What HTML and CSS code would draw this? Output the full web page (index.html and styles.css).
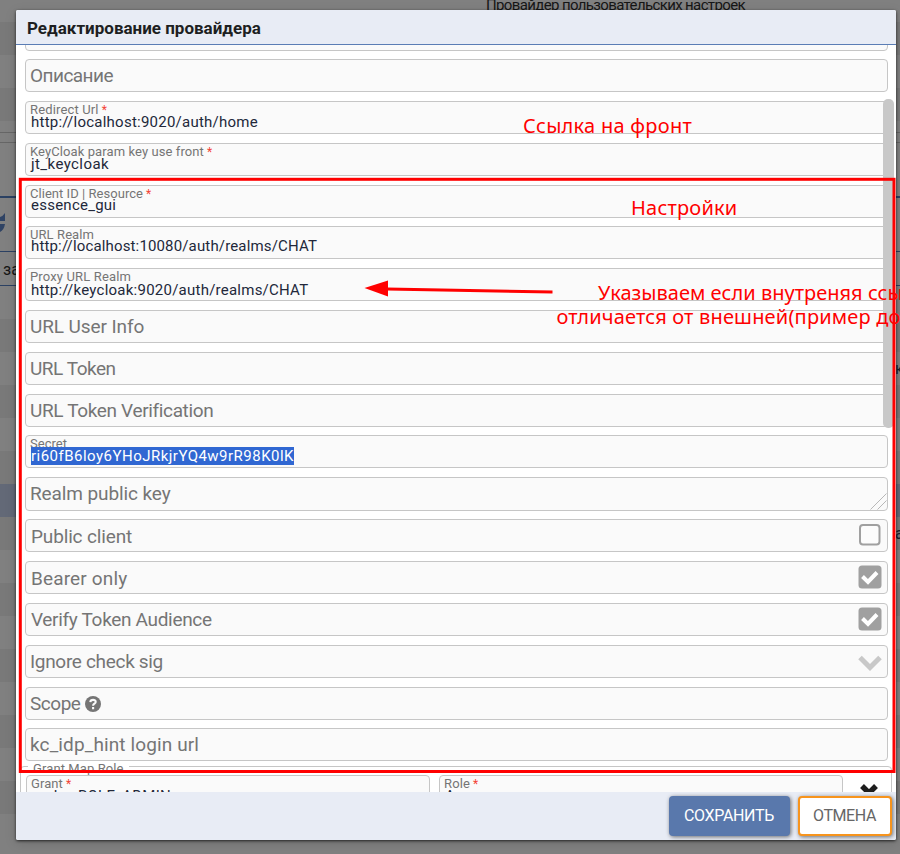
FILE: index.html
```html
<!DOCTYPE html>
<html lang="ru">
<head>
<meta charset="utf-8">
<title>Редактирование провайдера</title>
<link rel="stylesheet" href="styles.css">
</head>
<body>
<div class="page">
  <div class="bg-top"><span class="bg-title">Провайдер пользовательских настроек</span></div>
  <div class="stripe dark"></div><div class="stripe"></div><div class="stripe dark"></div>
  <div class="bg-gap"></div>
  <div class="bg-divider"></div>
  <div class="bg-panel"></div>
  <div class="bg-toolbar">
    <svg width="6" height="22" viewBox="0 0 6 22"><path d="M0 5Q3 4 5 1V9H0ZM0 12H5Q4 18 0 20Z" fill="#2f4364"/></svg>
  </div>
  <div class="bg-head">за</div>
  <div class="stripe"></div>
  <div class="stripe dark"></div><div class="stripe edge">к</div><div class="stripe dark"></div><div class="stripe"></div>
  <div class="stripe dark"></div><div class="stripe selected"></div><div class="stripe dark edge">а</div><div class="stripe"></div>
  <div class="stripe dark"></div><div class="stripe"></div><div class="stripe dark"></div><div class="stripe"></div>
  <div class="stripe dark"></div><div class="stripe"></div><div class="stripe dark"></div>
</div>

<div class="dialog">
  <header class="dialog-header">Редактирование провайдера</header>
  <main class="dialog-body">
    <div class="field cut"><span class="value">keycloak</span></div>
    <div class="field"><span class="placeholder w-opis">Описание</span></div>
    <div class="field filled"><span class="label w-15">Redirect Url<b>*</b></span><span class="value w-24">http://localhost:9020/auth/home</span></div>
    <div class="field filled"><span class="label w-09">KeyCloak param key use front<b>*</b></span><span class="value w-42">jt_keycloak</span></div>
    <div class="field filled up tight"><span class="label w-04">Client ID | Resource<b>*</b></span><span class="value w-24">essence_gui</span></div>
    <div class="field filled up"><span class="label w-09">URL Realm</span><span class="value w-15">http://localhost:10080/auth/realms/CHAT</span></div>
    <div class="field filled low"><span class="label w-15">Proxy URL Realm</span><span class="value w-24">http://keycloak:9020/auth/realms/CHAT</span></div>
    <div class="field"><span class="placeholder w-n10">URL User Info</span></div>
    <div class="field"><span class="placeholder w-n47">URL Token</span></div>
    <div class="field tight"><span class="placeholder w-n35">URL Token Verification</span></div>
    <div class="field filled"><span class="label w-04">Secret</span><span class="value picked w-48">ri60fB6loy6YHoJRkjrYQ4w9rR98K0lK</span></div>
    <div class="field area tight"><span class="placeholder w-n10">Realm public key</span>
      <svg class="grip" width="17" height="17" viewBox="0 0 17 17"><path d="M.5 16.500 16.500.5M7.500 16.500 16.500 7.500" stroke="#b8b8b8" fill="none"/></svg>
    </div>
    <div class="field option"><span class="placeholder w-n15">Public client</span>
      <svg class="mark" width="24" height="24" viewBox="0 0 24 24"><rect x="2" y="2" width="19.500" height="19.500" rx="3" fill="#fcfcfc" stroke="#a0a0a0" stroke-width="2"/></svg>
    </div>
    <div class="field option"><span class="placeholder w-15">Bearer only</span>
      <svg class="mark" width="24" height="24" viewBox="0 0 24 24"><rect width="23" height="23" x=".5" y=".5" rx="3.500" fill="#a0a0a0"/><path d="m4.500 11.500 5.500 5.500 9-9.500" fill="none" stroke="#fff" stroke-width="4"/></svg>
    </div>
    <div class="field option lift"><span class="placeholder w-n32">Verify Token Audience</span>
      <svg class="mark" width="24" height="24" viewBox="0 0 24 24"><rect width="23" height="23" x=".5" y=".5" rx="3.500" fill="#a0a0a0"/><path d="m4.500 11.500 5.500 5.500 9-9.500" fill="none" stroke="#fff" stroke-width="4"/></svg>
    </div>
    <div class="field"><span class="placeholder w-n32">Ignore check sig</span>
      <svg class="chevron" width="24" height="16" viewBox="0 0 24 16"><path d="m2 2.500 10 10 10-10" fill="none" stroke="#c8c8c8" stroke-width="5"/></svg>
    </div>
    <div class="field tight"><span class="placeholder w-n47">Scope</span>
      <svg class="help" width="16" height="16" viewBox="0 0 16 16"><circle cx="8" cy="8" r="8" fill="#757575"/><path d="M5.300 6.200C5.600 3 10.800 3.200 10.700 6 10.600 7.800 8.100 7.700 8.100 9.700M8.100 11v2.300" fill="none" stroke="#fafafa" stroke-width="2.100"/></svg>
    </div>
    <div class="field url"><span class="placeholder w-10">kc_idp_hint login url</span></div>
    <fieldset class="roles">
      <legend>Grant Map Role</legend>
      <div class="role-row">
        <div class="field filled"><span class="label w-09">Grant<b>*</b></span><span class="value w-24">realm_ROLE_ADMIN</span></div>
        <div class="field filled"><span class="label w-15">Role<b>*</b></span><span class="value">Админ</span></div>
        <svg class="remove" width="20" height="20" viewBox="0 0 20 20"><path d="m3 3 14 14M17 3 3 17" stroke="#1d1d1d" stroke-width="5.500"/></svg>
      </div>
    </fieldset>
  </main>
  <footer class="dialog-footer">
    <button class="btn save">СОХРАНИТЬ</button>
    <button class="btn cancel">ОТМЕНА</button>
  </footer>
  <div class="scrollbar"></div>
</div>

<svg class="notes" width="900" height="854" viewBox="0 0 900 854">
  <rect x="20.300" y="179.300" width="873.700" height="592.200" fill="none" stroke="#f00" stroke-width="3"/>
  <path d="M387 289 552.500 292" stroke="#f00" stroke-width="3"/>
  <path d="M364.500 288 388 280.500V296.500Z" fill="#f00"/>
  <text x="523" y="133" class="n1">Ссылка на фронт</text>
  <text x="631" y="214.500" class="n2">Настройки</text>
  <text x="598" y="300" class="n3">Указываем если внутреняя ссылка</text>
  <text x="556.500" y="324" class="n4">отличается от внешней(пример докер)</text>
</svg>
</body>
</html>
```
FILE: styles.css
```css
* { box-sizing: border-box; }
body {
  margin: 0;
  width: 900px;
  height: 854px;
  overflow: hidden;
  position: relative;
  background: #808080;
  font-family: Roboto, "Liberation Sans", sans-serif;
}

/* dimmed page behind the dialog */
.page { height: 854px; overflow: hidden; color: #161616; font-size: 16px; }
.bg-top { height: 22px; padding-left: 486px; overflow: hidden; }
.bg-title { display: block; font-size: 15px; line-height: 18px; margin-top: -4px; letter-spacing: -.63px; white-space: nowrap; }
.stripe { height: 33px; line-height: 33px; }
.stripe.dark { background: #797979; }
.stripe.selected { background: #636977; }
.stripe.edge { padding-left: 895px; white-space: nowrap; color: #18202e; }
.bg-gap { height: 11px; }
.bg-divider { height: 11px; border: solid #666; border-width: 1px 0; }
.bg-panel { height: 55px; border-bottom: 2px solid #2b4163; }
.bg-toolbar { height: 54px; padding-top: 14px; border-bottom: 1px solid #2b4163; }
.bg-toolbar svg { display: block; }
.bg-head { height: 34px; line-height: 35px; padding-left: 3px; border-bottom: 1px solid #2b4163; }

.dialog {
  position: absolute;
  left: 16px;
  top: 10px;
  width: 880px;
  height: 830px;
  display: flex;
  flex-direction: column;
  background: #fff;
  border-radius: 2px;
  box-shadow: 0 1px 3px rgba(0, 0, 0, .7), 0 3px 12px rgba(0, 0, 0, .15);
}
.dialog-header {
  flex: none;
  height: 35px;
  padding-left: 11px;
  border-bottom: 1px solid #5a7db5;
  border-radius: 2px 2px 0 0;
  background: #e8ecf5;
  color: #1d1f22;
  font-size: 17px;
  font-weight: 700;
  line-height: 36px;
}
.dialog-body { flex: 1; min-height: 0; overflow: hidden; padding: 0 8px 0 9px; }

.field {
  position: relative;
  height: 33px;
  margin-bottom: 9px;
  display: flex;
  align-items: center;
  padding-left: 4px;
  border: 1px solid #c6c6c6;
  border-radius: 4px;
  background: #fafafa;
  white-space: nowrap;
}
.field.tight { margin-bottom: 8px; }
.field.cut { margin-top: -27px; margin-bottom: 8px; align-items: flex-end; padding-bottom: 3px; }
.field.area { height: 34px; }
.field.area .placeholder { margin-top: -2px; }
.field.url { margin-bottom: 0; }
.placeholder { color: #757575; font-size: 19px; line-height: 31px; }
.field.option { padding-left: 5px; }
.field.option .placeholder { padding-top: 2px; }
.field.option.lift .placeholder { padding-top: 0; }

.field.filled { display: block; }
.label { display: block; height: 12px; line-height: 15px; font-size: 13px; color: #757575; }
.label b { color: #f44336; font-weight: 400; font-size: 12px; padding-left: 3px; }
.value { display: block; width: max-content; height: 18px; margin-left: 1px; line-height: 17px; font-size: 15px; color: #22283a; }
.filled.up .value { margin-top: -1px; }
.filled.low .value { margin-top: 1px; }
.value.picked { margin-top: -1px; line-height: 19px; background: #3067d2; color: #fff; position: relative; }

.mark { margin: -2px 5px 0 auto; }
.chevron { margin: 3px 5px 0 auto; }
.help { margin-left: 5px; }
.grip { margin: auto 0 0 auto; }

.w-opis { letter-spacing: -.54px; }
.w-n47 { letter-spacing: -.47px; }
.w-n35 { letter-spacing: -.35px; }
.w-n32 { letter-spacing: -.32px; }
.w-n15 { letter-spacing: -.15px; }
.w-n10 { letter-spacing: -.1px; }
.w-04 { letter-spacing: .04px; }
.w-09 { letter-spacing: .09px; }
.w-10 { letter-spacing: .12px; }
.w-15 { letter-spacing: .15px; }
.w-24 { letter-spacing: .24px; }
.w-42 { letter-spacing: .42px; }
.w-48 { letter-spacing: .48px; }

.roles { margin: -3px -4px 0 -5px; padding: 0 0 0 5px; height: 60px; border: 1px solid #c6c6c6; border-radius: 4px; min-width: 0; }
.roles legend { margin-left: 2px; padding: 0 5px; height: 16px; font-size: 13px; line-height: 21px; letter-spacing: .1px; color: #757575; }
.role-row { display: grid; grid-template-columns: 404px 404px 20px; column-gap: 9px; margin-top: 1px; }
.role-row .remove { margin: 8px 0 0 7px; }

.dialog-footer {
  flex: none;
  height: 48px;
  display: flex;
  justify-content: flex-end;
  gap: 8px;
  padding: 4px 4px 4px 0;
  background: #e8ecf5;
  border-radius: 0 0 2px 2px;
}
.btn { height: 40px; padding: 0 1px 1px 0; border-radius: 4px; font: 16px Roboto, sans-serif; box-shadow: 1px 1px 4px rgba(0, 0, 0, .55); }
.save { width: 121px; border: 0; background: #5978ac; color: #fff; letter-spacing: -.34px; }
.cancel { width: 94px; border: 2px solid #f7941d; background: #fff; color: #666; letter-spacing: -.4px; }
.scrollbar { position: absolute; left: 867px; top: 89px; width: 11px; height: 329px; border-radius: 5px; background: #c8c8c8; }

/* red annotations over the window */
.notes { position: absolute; left: 0; top: 0; font: 20px "Noto Sans", sans-serif; fill: #f00; }
.n1 { letter-spacing: .26px; }
.n2 { letter-spacing: .2px; }
.n3 { letter-spacing: .02px; }
.n4 { letter-spacing: .18px; }
```
